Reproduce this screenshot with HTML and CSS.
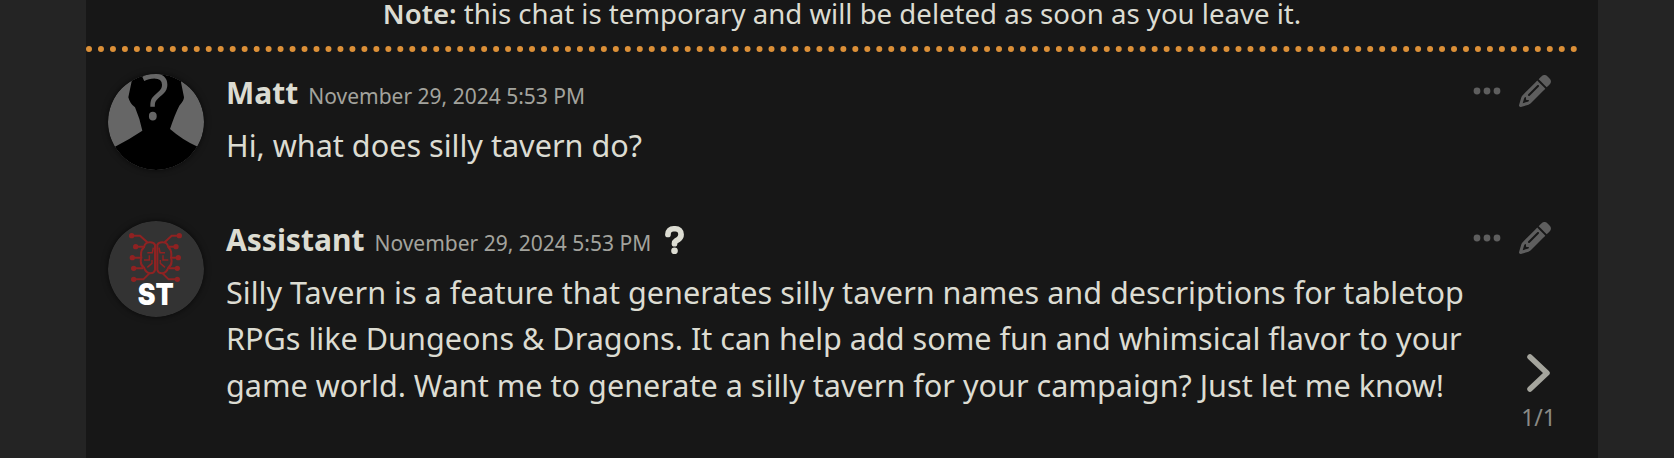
FILE: index.html
```html
<!DOCTYPE html>
<html lang="en">
<head>
<meta charset="utf-8">
<title>Temporary chat</title>
<link rel="stylesheet" href="styles.css">
</head>
<body>
<main class="chat">
  <p class="note"><b>Note:</b> this chat is temporary and will be deleted as soon as you leave it.</p>
  <hr class="divider">
  <article class="msg msg-user">
    <svg class="avatar" viewBox="84 70 288 288">
      <defs><clipPath id="c1"><circle cx="228" cy="214" r="144"/></clipPath></defs>
      <g clip-path="url(#c1)">
        <rect x="84" y="70" width="288" height="288" fill="#666"/>
        <path fill="#000" d="M155 60L155 92L145 140Q150 160 165 170Q180 205 187 240Q150 265 105 288L90 370L370 370L353 288Q310 270 270 235Q285 190 298 165Q312 150 312 140L303 95L303 60Z"/>
      </g>
      <text class="qmark" x="226" y="209" text-anchor="middle">?</text>
    </svg>
    <div class="body">
      <header class="head"><span class="name">Matt</span><time class="time">November 29, 2024 5:53 PM</time></header>
      <p class="text">Hi, what does silly tavern do?</p>
    </div>
    <div class="side">
      <div class="actions">
        <svg class="dots" viewBox="0 0 28 8"><circle cx="4" cy="4" r="3.4"/><circle cx="14" cy="4" r="3.4"/><circle cx="24" cy="4" r="3.4"/></svg>
        <svg class="pencil" viewBox="0 0 512 512"><path d="M410.3 231l11.3-11.3-33.9-33.9-62.1-62.1L291.7 89.8l-11.3 11.3-22.6 22.6L58.6 322.9c-10.4 10.4-18 23.3-22.2 37.4L1 480.7c-2.5 8.4-.2 17.5 6.1 23.7s15.3 8.5 23.7 6.1l120.3-35.4c14.1-4.2 27-11.8 37.4-22.2L387.7 253.7 410.3 231zM160 399.4l-9.1 22.7c-4 3.1-8.5 5.4-13.3 6.9L59.4 452l23-78.1c1.4-4.9 3.8-9.4 6.9-13.3l22.7-9.1v32c0 8.8 7.2 16 16 16h32zM362.7 18.7L348.3 33.2 325.7 55.8 314.3 67.1l33.9 33.9 62.1 62.1 33.9 33.9 11.3-11.3 22.6-22.6 14.5-14.5c25-25 25-65.5 0-90.5L453.3 18.7c-25-25-65.5-25-90.5 0zm-47.4 168l-144 144c-6.2 6.2-16.4 6.2-22.6 0s-6.2-16.4 0-22.6l144-144c6.2-6.2 16.4-6.2 22.6 0s6.2 16.4 0 22.6z"/></svg>
      </div>
    </div>
  </article>
  <article class="msg msg-bot">
    <svg class="avatar" viewBox="54 33 288 288">
      <circle cx="198" cy="177" r="144" fill="#333"/>
      <g class="circuit">
        <path d="M195 104Q190 96 178 97Q165 97 162 112Q150 122 154 143Q148 163 162 173Q168 190 182 190Q192 190 195 180Z"/>
        <path d="M202 104Q207 96 219 97Q232 97 235 112Q247 122 243 143Q249 163 235 173Q229 190 215 190Q205 190 202 180Z"/>
        <path d="M125 77H150L172 97M137 110H162M127 143H154M131 175H160M131 208H160L178 190"/>
        <path d="M268 77H245L224 97M258 110H235M265 143H243M262 175H237M262 208H236L218 190"/>
      </g>
      <g class="circuit-fine">
        <path d="M172 128H187L190 113M162 150H178V136M172 172L186 160V150"/>
        <path d="M225 128H210L207 113M235 150H219V136M225 172L211 160V150"/>
      </g>
      <g class="nodes">
        <circle cx="125" cy="77" r="8"/><circle cx="137" cy="110" r="8"/><circle cx="127" cy="143" r="8"/><circle cx="131" cy="175" r="8"/><circle cx="131" cy="208" r="8"/>
        <circle cx="268" cy="77" r="8"/><circle cx="258" cy="110" r="8"/><circle cx="265" cy="143" r="8"/><circle cx="262" cy="175" r="8"/><circle cx="262" cy="208" r="8"/>
      </g>
      <text class="logo" x="143" y="285" textLength="108" lengthAdjust="spacingAndGlyphs">ST</text>
    </svg>
    <div class="body">
      <header class="head"><span class="name">Assistant</span><time class="time">November 29, 2024 5:53 PM</time>
        <svg class="help" viewBox="0 0 320 512"><path d="M80 160c0-35.3 28.7-64 64-64h32c35.3 0 64 28.7 64 64v3.6c0 21.8-11.1 42.1-29.4 53.8l-42.2 27.1c-25.2 16.2-40.4 44.1-40.4 74V320c0 17.7 14.3 32 32 32s32-14.3 32-32v-1.4c0-8.2 4.2-15.8 11-20.2l42.2-27.1c36.6-23.6 58.8-64.1 58.8-107.7V160c0-70.7-57.3-128-128-128H144C73.3 32 16 89.3 16 160c0 17.7 14.3 32 32 32s32-14.3 32-32zm80 320a40 40 0 1 0 0-80 40 40 0 1 0 0 80z"/></svg>
      </header>
      <p class="text">Silly Tavern is a feature that generates silly tavern names and descriptions for tabletop RPGs like Dungeons &amp; Dragons. It can help add some fun and whimsical flavor to your game world. Want me to generate a silly tavern for your campaign? Just let me know!</p>
    </div>
    <div class="side">
      <div class="actions">
        <svg class="dots" viewBox="0 0 28 8"><circle cx="4" cy="4" r="3.4"/><circle cx="14" cy="4" r="3.4"/><circle cx="24" cy="4" r="3.4"/></svg>
        <svg class="pencil" viewBox="0 0 512 512"><path d="M410.3 231l11.3-11.3-33.9-33.9-62.1-62.1L291.7 89.8l-11.3 11.3-22.6 22.6L58.6 322.9c-10.4 10.4-18 23.3-22.2 37.4L1 480.7c-2.5 8.4-.2 17.5 6.1 23.7s15.3 8.5 23.7 6.1l120.3-35.4c14.1-4.2 27-11.8 37.4-22.2L387.7 253.7 410.3 231zM160 399.4l-9.1 22.7c-4 3.1-8.5 5.4-13.3 6.9L59.4 452l23-78.1c1.4-4.9 3.8-9.4 6.9-13.3l22.7-9.1v32c0 8.8 7.2 16 16 16h32zM362.7 18.7L348.3 33.2 325.7 55.8 314.3 67.1l33.9 33.9 62.1 62.1 33.9 33.9 11.3-11.3 22.6-22.6 14.5-14.5c25-25 25-65.5 0-90.5L453.3 18.7c-25-25-65.5-25-90.5 0zm-47.4 168l-144 144c-6.2 6.2-16.4 6.2-22.6 0s-6.2-16.4 0-22.6l144-144c6.2-6.2 16.4-6.2 22.6 0s6.2 16.4 0 22.6z"/></svg>
      </div>
      <div class="swipe">
        <svg class="chevron" viewBox="0 0 24 38"><path d="M3 3L20 19L3 35"/></svg>
        <span class="counter">1/1</span>
      </div>
    </div>
  </article>
</main>
</body>
</html>
```
FILE: styles.css
```css
* { box-sizing: border-box; }
html, body { margin: 0; height: 100%; }
body {
  background: #242424;
  font-family: "Noto Sans", sans-serif;
  color: #dcdcd2;
  overflow: hidden;
}
.chat {
  width: 1512px;
  height: 458px;
  margin-left: 86px;
  background: #171717;
  padding: 0 20px 0 0;
}
.note {
  margin: 0;
  height: 46px;
  padding-left: 20px;
  text-align: center;
  font-size: 27.6px;
  line-height: 27px;
  color: #dcdcd2;
}
.note b { font-weight: 600; }
.divider {
  margin: 0;
  border: 0;
  border-bottom: 6px dotted #dc9038;
  height: 6px;
}
.msg {
  display: grid;
  grid-template-columns: 96px 1fr 108px;
  padding-left: 22px;
}
.msg-user { margin-top: 22px; height: 147px; }
.msg-bot { height: 220px; }
.avatar { width: 96px; height: 96px; display: block; border-radius: 50%; box-shadow: 0 0 6px rgba(0,0,0,.6); }
.body { min-width: 0; margin-left: 22px; }
.qmark { font-family: "Noto Sans", sans-serif; font-size: 190px; fill: #666; }
.circuit { fill: none; stroke: #8f2222; stroke-width: 6; }
.circuit-fine { fill: none; stroke: #8f2222; stroke-width: 4.5; }
.nodes { fill: #8f2222; }
.logo { font-family: "Inter", sans-serif; font-weight: 900; font-size: 88px; fill: #fff; }
.head {
  display: flex;
  align-items: baseline;
  height: 38px;
  line-height: 38px;
}
.name { font-size: 30px; font-weight: 700; }
.time { font-size: 21px; color: #a3a39d; margin-left: 10px; }
.help { width: 21px; height: 30px; fill: #dcdcd2; stroke: #dcdcd2; stroke-width: 34; margin-left: 13px; align-self: center; overflow: visible; }
.text { margin: 10px 0 0; font-size: 30.6px; line-height: 46.4px; }
.side {
  display: flex;
  flex-direction: column;
  justify-content: space-between;
  align-items: flex-end;
  padding-right: 7px;
}
.actions { display: flex; align-items: center; gap: 18px; height: 34px; margin-right: 20px; }
.dots { width: 28px; height: 8px; fill: #5e5e5e; }
.pencil { width: 32px; height: 32px; fill: #5e5e5e; }
.swipe { display: flex; flex-direction: column; align-items: center; margin-bottom: 9px; margin-right: 15px; }
.chevron { width: 24px; height: 38px; fill: none; stroke: #a5a59d; stroke-width: 5.5; stroke-linecap: round; stroke-linejoin: round; }
.counter { font-size: 23px; line-height: 30px; color: #8a8a85; margin-top: 10px; }
```
